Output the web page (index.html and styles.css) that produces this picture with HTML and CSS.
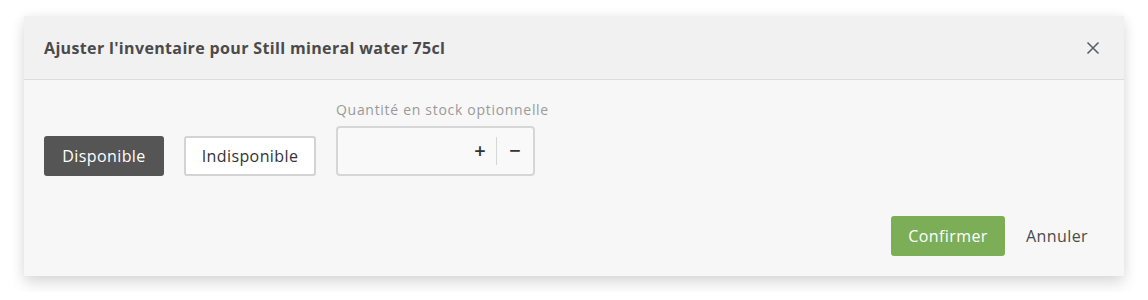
FILE: index.html
```html
<!DOCTYPE html>
<html lang="fr">
<head>
<meta charset="utf-8">
<link rel="stylesheet" href="styles.css">
</head>
<body>
<div class="modal">
  <div class="modal-header">
    <h2 class="modal-title">Ajuster l'inventaire pour Still mineral water 75cl</h2>
    <button class="close" aria-label="Fermer">
      <svg width="14" height="14" viewBox="0 0 14 14"><path d="M1.5 1.5 L12.5 12.5 M12.5 1.5 L1.5 12.5" stroke="#5a5f66" stroke-width="1.6" fill="none"/></svg>
    </button>
  </div>
  <div class="modal-body">
    <button class="btn btn-dark">Disponible</button>
    <button class="btn btn-outline">Indisponible</button>
    <div class="field">
      <label class="field-label">Quantité en stock optionnelle</label>
      <div class="stepper">
        <input class="stepper-input" type="text">
        <span class="step">+</span>
        <span class="sep"></span>
        <span class="step">−</span>
      </div>
    </div>
  </div>
  <div class="modal-footer">
    <button class="btn btn-green">Confirmer</button>
    <button class="btn btn-link">Annuler</button>
  </div>
</div>
</body>
</html>
```
FILE: styles.css
```css
html, body {
  margin: 0;
  padding: 0;
  background: #ffffff;
  font-family: "Open Sans", "Noto Sans", sans-serif;
}
body {
  padding: 16px 24px;
}
.modal {
  width: 1100px;
  background: #f7f7f7;
  box-shadow: 0 8px 14px rgba(0,0,0,0.12), 0 0 12px rgba(0,0,0,0.06);
}
.modal-header {
  height: 63px;
  background: #f1f1f1;
  border-bottom: 1px solid #dcdcdc;
  display: flex;
  align-items: center;
  justify-content: space-between;
  padding: 0 24px 0 20px;
}
.modal-title {
  margin: 0;
  font-size: 16px;
  font-weight: 700;
  color: #4a4a4a;
  letter-spacing: 0.35px;
}
.close {
  background: none;
  border: none;
  padding: 0;
  width: 14px;
  height: 14px;
  display: flex;
  cursor: pointer;
}
.modal-body {
  display: flex;
  align-items: flex-end;
  padding: 20px 20px 0;
  gap: 20px;
}
.btn {
  font-family: inherit;
  font-size: 16px;
  letter-spacing: 0.4px;
  height: 40px;
  border-radius: 3px;
  padding: 0;
  cursor: pointer;
}
.btn-dark {
  background: #555555;
  color: #ffffff;
  border: none;
  width: 120px;
}
.btn-outline {
  background: #ffffff;
  color: #333333;
  border: 2px solid #d3d3d3;
  width: 132px;
}
.field {
  display: flex;
  flex-direction: column;
  gap: 6px;
}
.field-label {
  font-size: 14px;
  letter-spacing: 0.7px;
  color: #9a9a9a;
  line-height: 20px;
}
.stepper {
  width: 199px;
  height: 50px;
  box-sizing: border-box;
  border: 2px solid #d6d6d6;
  border-radius: 4px;
  background: #f9f9f9;
  display: flex;
  align-items: center;
}
.stepper-input {
  flex: 1;
  min-width: 0;
  border: none;
  background: transparent;
  height: 100%;
  outline: none;
}
.step {
  width: 20px;
  text-align: center;
  font-size: 20px;
  font-weight: 600;
  color: #333;
  line-height: 1;
}
.step:last-child {
  margin: 0 8px 0 8px;
}
.sep {
  width: 1px;
  height: 28px;
  background: #d6d6d6;
  margin: 0 0 0 6px;
}
.modal-footer {
  display: flex;
  justify-content: flex-end;
  align-items: center;
  gap: 5px;
  padding: 40px 20px 20px;
}
.btn-green {
  background: #7bae57;
  color: #ffffff;
  border: none;
  width: 114px;
}
.btn-link {
  background: none;
  border: none;
  color: #4a4a4a;
  padding: 0 16px;
}
```
